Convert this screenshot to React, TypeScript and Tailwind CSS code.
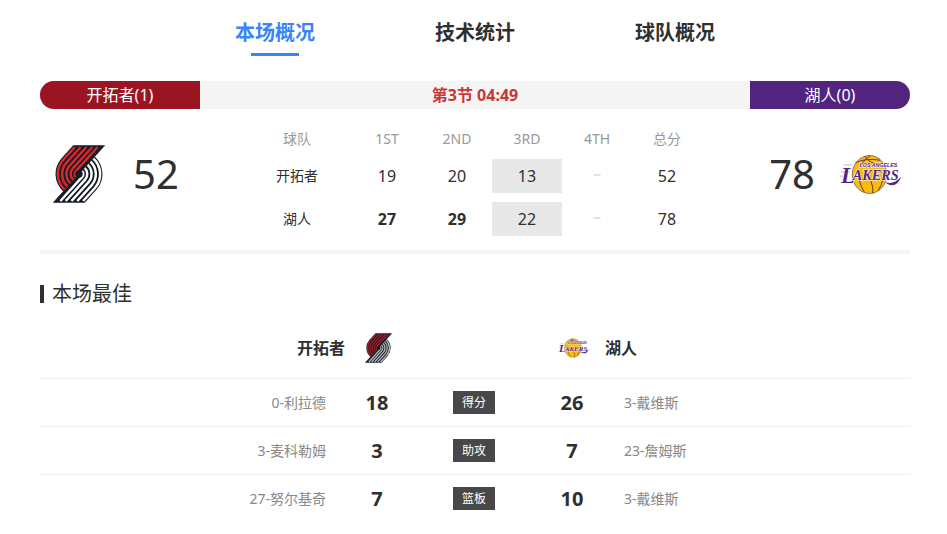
const tabs = ["本场概况", "技术统计", "球队概况"];

const periods = ["1ST", "2ND", "3RD", "4TH", "总分"];

const currentPeriod = 2;

const lineScores = [
  { team: "开拓者", scores: ["19", "20", "13", "–", "52"], won: [false, false, false, false, false] },
  { team: "湖人", scores: ["27", "29", "22", "–", "78"], won: [true, true, false, false, false] },
];

const leaders = [
  { label: "得分", away: "0-利拉德", awayValue: 18, home: "3-戴维斯", homeValue: 26 },
  { label: "助攻", away: "3-麦科勒姆", awayValue: 3, home: "23-詹姆斯", homeValue: 7 },
  { label: "篮板", away: "27-努尔基奇", awayValue: 7, home: "3-戴维斯", homeValue: 10 },
];

// One stripe: a diagonal run from the top edge, then a quarter turn around the hub
function stripe(r: number, top: number) {
  const cx = 85;
  const cy = 95.5;
  const tx = cx - r * 0.74;
  const ty = cy - r * 0.67;
  const startX = tx + (ty - top) * 0.905;
  return `M${startX} ${top} L${tx} ${ty} A${r} ${r} 0 0 0 ${cx - r * 0.67} ${cy + r * 0.74}`;
}

function BlazersLogo({ className, red, light }: { className: string; red: string; light: string }) {
  const radii = [64, 51, 38, 25, 13];
  const half = (color: string) => (
    <>
      <path d={`${stripe(71, 9)} L85 95.5 L163 9 Z`} fill="#141b24" />
      {radii.map((r) => (
        <path key={r} d={stripe(r, 14)} fill="none" stroke={color} strokeWidth={7.5} />
      ))}
    </>
  );
  return (
    <svg className={className} viewBox="7 8 156 175" role="img" aria-label="开拓者">
      <g transform="rotate(180 85 95.5)">{half(light)}</g>
      {half(red)}
      <path d="M163 9 L85 95.5 L7 182" stroke="#141b24" strokeWidth={2} fill="none" />
      <circle cx="85" cy="95.5" r="11" fill="#141b24" />
    </svg>
  );
}

function LakersLogo({ className }: { className: string }) {
  return (
    <svg className={className} viewBox="240 70 190 122" role="img" aria-label="湖人">
      <ellipse cx="332" cy="131" rx="52" ry="57" fill="#fdb90f" stroke="#8a7748" strokeWidth={3} />
      <g fill="none" stroke="#5c4413" strokeWidth={3}>
        <path d="M290 96 Q318 80 364 88" />
        <path d="M318 76 Q326 92 350 98" />
        <path d="M334 74 Q318 84 305 104" />
        <path d="M301 148 Q306 168 316 184" />
        <path d="M336 150 Q344 168 342 188" />
        <path d="M372 148 Q368 164 358 180" />
      </g>
      <g stroke="#a58cc0" strokeWidth={2}>
        <path d="M254 102 H280" />
        <path d="M250 112 H276" />
        <path d="M246 124 H272" />
        <path d="M243 136 H268" />
      </g>
      <g
        fill="#552583"
        stroke="#ffffff"
        strokeWidth={3}
        paintOrder="stroke"
        fontStyle="italic"
        fontWeight="bold"
      >
        <text x="302" y="109" fontSize="16" fontFamily="Liberation Sans, sans-serif">
          LOS ANGELES
        </text>
        <text x="246" y="156" fontSize="68" fontFamily="Liberation Serif, serif">
          L
          <tspan dx="-6" dy="-7" fontSize="43">
            AKERS
          </tspan>
        </text>
      </g>
      <path d="M378 152 Q400 166 428 138 Q412 176 384 158 Z" fill="#552583" />
    </svg>
  );
}

function Tabs() {
  return (
    <nav className="flex justify-center">
      {tabs.map((tab, index) => (
        <button
          key={tab}
          className={
            index === 0
              ? "flex w-[200px] flex-col items-center text-xl font-bold text-[#3983fc]"
              : "flex w-[200px] flex-col items-center text-xl font-bold text-[#2f2f2f]"
          }
        >
          <span className="leading-10">{tab}</span>
          <span className={index === 0 ? "h-[3px] w-12 bg-[#3983fc]" : "h-[3px] w-12"} />
        </button>
      ))}
    </nav>
  );
}

function LineScore() {
  return (
    <table className="table-fixed w-[460px] shrink-0 text-center">
      <thead>
        <tr className="h-[31px] text-sm text-[#999]">
          <th className="w-[110px] font-normal">球队</th>
          {periods.map((period) => (
            <th key={period} className="w-[70px] font-normal">
              {period}
            </th>
          ))}
        </tr>
      </thead>
      <tbody>
        {lineScores.map((row) => (
          <tr key={row.team} className="h-[43px]">
            <th className="text-sm font-normal">{row.team}</th>
            {row.scores.map((score, index) => (
              <td key={index}>
                <div
                  className={[
                    "h-[34px]",
                    index === currentPeriod ? "bg-[#e8e8e8]" : "",
                    row.won[index] ? "font-bold" : "",
                    score === "–" ? "font-bold leading-7 text-[#e1e1e6]" : "leading-[34px]",
                  ].join(" ")}
                >
                  {score}
                </div>
              </td>
            ))}
          </tr>
        ))}
      </tbody>
    </table>
  );
}

function Leaders() {
  return (
    <section>
      <h2 className="flex items-center gap-2 pt-[25px] text-xl leading-[30px]">
        <span className="h-[18px] w-1 bg-[#2f2f2f]" />
        本场最佳
      </h2>

      <div className="flex h-[69px] items-center gap-[166px] pt-2 font-bold">
        <div className="flex flex-1 items-center justify-end gap-5">
          开拓者
          <BlazersLogo className="h-[30px] w-[27px]" red="#a81c2b" light="#b4b8bc" />
        </div>
        <div className="flex flex-1 items-center gap-4">
          <LakersLogo className="h-5 w-[31px]" />
          湖人
        </div>
      </div>

      <table className="w-full table-fixed text-center">
        <colgroup>
          <col />
          <col className="w-[102px]" />
          <col className="w-[92px]" />
          <col className="w-[104px]" />
          <col />
        </colgroup>
        <tbody>
          {leaders.map((row) => (
            <tr key={row.label} className="h-12 border-t border-[#edf1f3]">
              <td className="text-right text-sm text-[#888]">{row.away}</td>
              <td className="text-xl font-bold">{row.awayValue}</td>
              <td>
                <span className="mx-auto block h-[23px] w-[42px] bg-[#484848] text-xs leading-[23px] text-white">
                  {row.label}
                </span>
              </td>
              <td className="text-xl font-bold">{row.homeValue}</td>
              <td className="text-left text-sm text-[#888]">{row.home}</td>
            </tr>
          ))}
        </tbody>
      </table>
    </section>
  );
}

export default function App() {
  return (
    <main className="bg-white pt-[13px] pr-[37px] pb-3 pl-10 font-['Noto_Sans','Noto_Sans_CJK_SC',sans-serif] text-base text-[#2f2f2f]">
      <Tabs />

      {/* Status bar */}
      <div className="mt-[25px] flex h-7 overflow-hidden rounded-full bg-[#f5f5f5] text-center leading-7">
        <div className="w-40 bg-[#9b1422] text-white">开拓者(1)</div>
        <div className="flex-1 font-bold text-[#cb3634]">第3节 04:49</div>
        <div className="w-40 bg-[#52247f] text-white">湖人(0)</div>
      </div>

      {/* Scoreboard */}
      <div className="flex items-start justify-between border-b-4 border-[#f5f5f5] pt-[14px] pb-[10px]">
        <div className="flex h-[102px] w-[202px] items-center gap-7 pl-[13px]">
          <BlazersLogo className="h-[58px] w-[52px]" red="#d8282c" light="#ffffff" />
          <span className="text-[40px] leading-none">52</span>
        </div>
        <LineScore />
        <div className="flex h-[102px] w-[208px] items-center justify-end gap-6 pr-2">
          <span className="text-[40px] leading-none">78</span>
          <LakersLogo className="h-[41px] w-[63px]" />
        </div>
      </div>

      <Leaders />
    </main>
  );
}
